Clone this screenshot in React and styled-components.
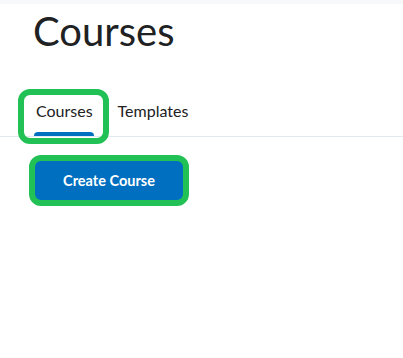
import React from 'react'
import styled, {createGlobalStyle} from 'styled-components'

const GlobalStyle = createGlobalStyle`
  html, body {
    margin: 0;
    background: #fff;
    font-family: Lato, "Open Sans", sans-serif;
    color: #202122;
  }
`

const highlight = '#22c155'

const TopStrip = styled.div`
  height: 4px;
  background: #f7f8f9;
`

const Page = styled.main`
  display: flex;
  flex-direction: column;
  align-items: flex-start;
  padding-bottom: 20px;
`

const Heading = styled.h1`
  margin: 2px 0 0 33px;
  font-size: 40px;
  font-weight: 400;
  line-height: 50px;
  color: #202122;
`

const TabBar = styled.div`
  display: flex;
  align-self: stretch;
  gap: 3px;
  margin-top: 39px;
  padding-left: 24px;
  border-bottom: 1px solid #e3e9f1;
`

const Tab = styled.div`
  position: relative;
  height: 41px;
  box-sizing: border-box;
  padding: 6px 10px 0 12px;
  font-size: 16px;
  line-height: 19px;
  color: #202122;

  ${props => props.$active && `
    &::after {
      content: '';
      position: absolute;
      left: 10px;
      right: 9px;
      bottom: 0;
      height: 4px;
      border-radius: 4px 4px 0 0;
      background: #006fbf;
    }
  `}

  ${props => props.$marked && `
    &::before {
      content: '';
      position: absolute;
      top: -6px;
      left: -6px;
      right: -6px;
      bottom: -8px;
      border: 6px solid ${highlight};
      border-radius: 12px;
    }
  `}
`

const Button = styled.button`
  margin: 18px 0 0 29px;
  width: 160px;
  height: 51px;
  box-sizing: border-box;
  border: 6px solid ${highlight};
  border-radius: 12px;
  background: #006fbf;
  color: #fff;
  font-family: Lato, "Open Sans", sans-serif;
  font-size: 14.5px;
  font-weight: 700;
  padding: 0;
  cursor: pointer;
`

const App = () => (
  <>
    <GlobalStyle />
    <TopStrip />
    <Page>
      <Heading>Courses</Heading>
      <TabBar>
        <Tab $active $marked>Courses</Tab>
        <Tab>Templates</Tab>
      </TabBar>
      <Button>Create Course</Button>
    </Page>
  </>
)

export default App
